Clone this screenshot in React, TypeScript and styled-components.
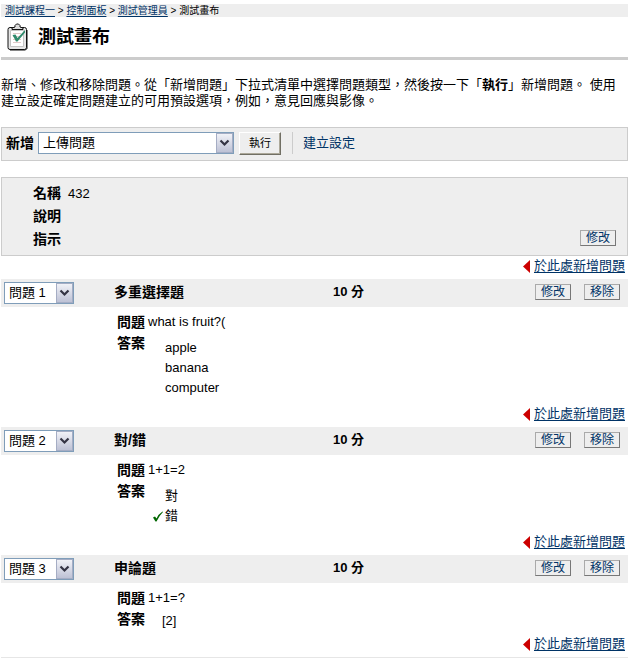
import React from "react";
import styled, { createGlobalStyle } from "styled-components";

const GlobalStyle = createGlobalStyle`
  *, *::before, *::after { box-sizing: border-box; }
  body {
    margin: 0;
    background: #fff;
    color: #000;
    font-family: "Liberation Sans", "Noto Sans CJK TC", sans-serif;
    font-size: 13px;
    line-height: 20px;
  }
  select, button { font: inherit; color: inherit; }
`;

const Page = styled.div`
  padding: 4px 0 0 1px;
`;

const Breadcrumbs = styled.nav`
  padding-left: 4px;
  background: #eee;
  font-size: 10px;
  line-height: 13px;
  white-space: pre;
`;

const TextLink = styled.a<{ $plain?: boolean }>`
  color: #036;
  text-decoration: ${(p) => (p.$plain ? "none" : "underline")};
  text-underline-offset: 2px;
`;

const TitleBar = styled.header`
  display: flex;
  align-items: center;
  gap: 10px;
  height: 43px;
  padding: 0 0 0 6px;
  border-bottom: 3px solid #ccc;
`;

const Title = styled.h1`
  margin: 0;
  font-size: 18px;
  line-height: 24px;
`;

const Intro = styled.p`
  margin: 17px 0 18px;
  line-height: 16px;
`;

const ActionBar = styled.form`
  display: flex;
  align-items: center;
  height: 34px;
  padding: 0 0 2px 4px;
  border: 1px solid #ccc;
  background: #eee;
`;

const FieldName = styled.label`
  margin-right: 4px;
  font-size: 14px;
  font-weight: bold;
`;

const SelectBox = styled.span<{ $wide?: boolean }>`
  position: relative;
  display: inline-block;
  width: ${(p) => (p.$wide ? 196 : 70)}px;
  height: 22px;
`;

const SelectField = styled.select`
  display: block;
  width: 100%;
  height: 22px;
  padding: 0 20px 0 4px;
  border: 1px solid #7f9db9;
  border-radius: 0;
  background: #fff;
  line-height: 20px;
  appearance: none;
`;

const SelectArrow = styled.svg`
  position: absolute;
  top: 1px;
  right: 1px;
  pointer-events: none;
`;

const RunButton = styled.button`
  width: 42px;
  height: 23px;
  margin-left: 5px;
  padding: 0;
  border: 1px solid;
  border-color: #fff #716f64 #716f64 #fff;
  box-shadow: inset -1px -1px #aca899;
  background: #eee;
  font-size: 11px;
  line-height: 20px;
`;

const Divider = styled.span`
  height: 22px;
  margin: 0 10px 0 11px;
  border-left: 1px solid #ccc;
`;

const Details = styled.section`
  display: flex;
  align-items: flex-end;
  justify-content: space-between;
  margin-top: 16px;
  padding: 4px 11px 4px 31px;
  border: 1px solid #ccc;
  background: #eee;
`;

const DetailList = styled.dl`
  display: grid;
  grid-template-columns: auto 1fr;
  column-gap: 7px;
  margin: 0;
  line-height: 23px;

  dt { font-size: 14px; font-weight: bold; }
  dd { margin: 0; }
`;

const SmallButton = styled.button`
  width: 36px;
  height: 16px;
  margin: 0;
  padding: 0;
  border: 1px solid;
  border-color: #aaa #777 #777 #aaa;
  background: #eee;
  color: #036;
  font-size: 12px;
  line-height: 12px;
`;

const DetailAction = styled.div`
  display: flex;
  padding-bottom: 5px;
`;

const InsertRow = styled.div`
  display: flex;
  justify-content: flex-end;
  align-items: center;
  gap: 4px;
  height: 23px;
  padding: 0 3px 3px 0;
`;

const QuestionHeader = styled.header`
  display: grid;
  grid-template-columns: 110px 219px 1fr auto;
  align-items: center;
  height: 28px;
  padding: 0 8px 0 3px;
  background: #eee;
`;

const QuestionType = styled.h2`
  margin: 0;
  padding-bottom: 3px;
  font-size: 14px;
  line-height: 20px;
`;

const Points = styled.strong`
  padding-bottom: 2px;
`;

const HeaderActions = styled.div`
  display: flex;
  gap: 13px;
  padding-bottom: 2px;
`;

const QuestionBody = styled.dl<{ $compact?: boolean }>`
  display: grid;
  grid-template-columns: 28px 1fr;
  column-gap: 3px;
  margin: 0;
  padding: 5px 0 ${(p) => (p.$compact ? 3 : 6)}px 116px;

  dt { font-size: 14px; font-weight: bold; line-height: 21px; }
  dd { margin: 0; }
`;

const Answers = styled.ul<{ $compact?: boolean }>`
  margin: 0;
  padding: ${(p) => (p.$compact ? "2px 0 0 14px" : "5px 0 0 4px")};
  list-style: none;
`;

const Answer = styled.li`
  display: flex;
  align-items: center;
  height: 20px;
`;

const Mark = styled.span`
  width: 13px;
  height: 14px;
`;

const EndRule = styled.hr`
  height: 1px;
  margin: 0;
  border: 0;
  background: #e6e6e6;
`;

interface DropdownProps {
  id: string;
  label?: string;
  options: string[];
  value: string;
  wide?: boolean;
}

function Dropdown({ id, label, options, value, wide }: DropdownProps) {
  return (
    <SelectBox $wide={wide}>
      <SelectField id={id} aria-label={label} defaultValue={value}>
        {options.map((o) => <option key={o}>{o}</option>)}
      </SelectField>
      <SelectArrow width="17" height="20" viewBox="0 0 17 20" aria-hidden="true">
        <defs>
          <linearGradient id={id + "-fill"} x1="0" y1="0" x2="0" y2="1">
            <stop offset="0" stopColor="#f2f3f8" />
            <stop offset="1" stopColor="#bcc0d4" />
          </linearGradient>
        </defs>
        <rect x=".5" y=".5" width="16" height="19" fill={`url(#${id}-fill)`} stroke="#a5adc4" />
        <path d="M4.500 7.500l4 4 4-4" fill="none" stroke="#343444" strokeWidth="2.200" />
      </SelectArrow>
    </SelectBox>
  );
}

function ClipboardIcon() {
  return (
    <svg width="21" height="28" viewBox="0 0 21 28" aria-hidden="true">
      <rect x="1" y="4.500" width="18.500" height="22" rx="2" fill="#e6e6e6" stroke="#111" />
      <path d="M20 7v18.500l-1.500 1.500H3" fill="none" stroke="#111" />
      <path d="M3.500 7.500h13v16h-13z" fill="#fff" stroke="#c4c4c4" />
      <path d="M5 6.500V5l3-1V2.500L9.500 1h2L13 2.500V4l3 1v1.500z" fill="#ddd" stroke="#111" />
      <path d="M6 10.500h8M6 13.500h8M6 16.500h8M6 19.500h8" stroke="#e0c8c8" />
      <path d="M5.500 12l3-.5 2 3.500L18 7v2.500L10.500 18.500H9z" fill="#2f8a6c" />
    </svg>
  );
}

function InsertLink() {
  return (
    <InsertRow>
      <svg width="7" height="14" viewBox="0 0 7 14" aria-hidden="true">
        <path d="M7 1v13L0 7.500z" fill="#c00" />
      </svg>
      <TextLink href="#add">於此處新增問題</TextLink>
    </InsertRow>
  );
}

interface QuestionData {
  type: string;
  text: string;
  answers: string[];
  correct?: number;
  compact?: boolean;
}

const questions: QuestionData[] = [
  { type: "多重選擇題", text: "what is fruit?(", answers: ["apple", "banana", "computer"] },
  { type: "對/錯", text: "1+1=2", answers: ["對", "錯"], correct: 1 },
  { type: "申論題", text: "1+1=?", answers: ["[2]"], compact: true },
];

const positions = questions.map((_, i) => `問題 ${i + 1}`);

function Question({ data, index }: { data: QuestionData; index: number }) {
  return (
    <article>
      <QuestionHeader>
        <Dropdown id={`position-${index}`} label="問題順序" options={positions} value={positions[index]} />
        <QuestionType>{data.type}</QuestionType>
        <Points>10 分</Points>
        <HeaderActions>
          <SmallButton type="button">修改</SmallButton>
          <SmallButton type="button">移除</SmallButton>
        </HeaderActions>
      </QuestionHeader>
      <QuestionBody $compact={data.compact}>
        <dt>問題</dt>
        <dd>{data.text}</dd>
        <dt>答案</dt>
        <dd>
          <Answers $compact={data.compact}>
            {data.answers.map((a, i) => (
              <Answer key={a}>
                {!data.compact && (
                  <Mark>
                    {data.correct === i && (
                      <svg width="12" height="14" viewBox="0 0 12 14" role="img" aria-label="正確">
                        <path d="M1 8.500l2-1 1.500 2Q6.500 5 10.500 2.500l.5.500Q7 7 4.500 12.500H3.500z" fill="#060" />
                      </svg>
                    )}
                  </Mark>
                )}
                {a}
              </Answer>
            ))}
          </Answers>
        </dd>
      </QuestionBody>
      <InsertLink />
    </article>
  );
}

export default function App() {
  return (
    <>
      <GlobalStyle />
      <Page>
        <Breadcrumbs>
          <TextLink href="#course">測試課程一</TextLink>{" > "}
          <TextLink href="#panel">控制面板</TextLink>{" > "}
          <TextLink href="#manager">測試管理員</TextLink>{" > 測試畫布"}
        </Breadcrumbs>
        <TitleBar>
          <ClipboardIcon />
          <Title>測試畫布</Title>
        </TitleBar>
        <Intro>
          新增、修改和移除問題。從「新增問題」下拉式清單中選擇問題類型，然後按一下「<b>執行</b>」新增問題。 使用建立設定確定問題建立的可用預設選項，例如，意見回應與影像。
        </Intro>
        <ActionBar onSubmit={(e) => e.preventDefault()}>
          <FieldName htmlFor="question-type">新增</FieldName>
          <Dropdown id="question-type" options={["上傳問題", "多重選擇題", "對/錯", "申論題"]} value="上傳問題" wide />
          <RunButton type="submit">執行</RunButton>
          <Divider />
          <TextLink $plain href="#settings">建立設定</TextLink>
        </ActionBar>
        <Details>
          <DetailList>
            <dt>名稱</dt>
            <dd>432</dd>
            <dt>說明</dt>
            <dd />
            <dt>指示</dt>
            <dd />
          </DetailList>
          <DetailAction>
            <SmallButton type="button">修改</SmallButton>
          </DetailAction>
        </Details>
        <InsertLink />
        {questions.map((q, i) => <Question key={q.type} data={q} index={i} />)}
        <EndRule />
      </Page>
    </>
  );
}
